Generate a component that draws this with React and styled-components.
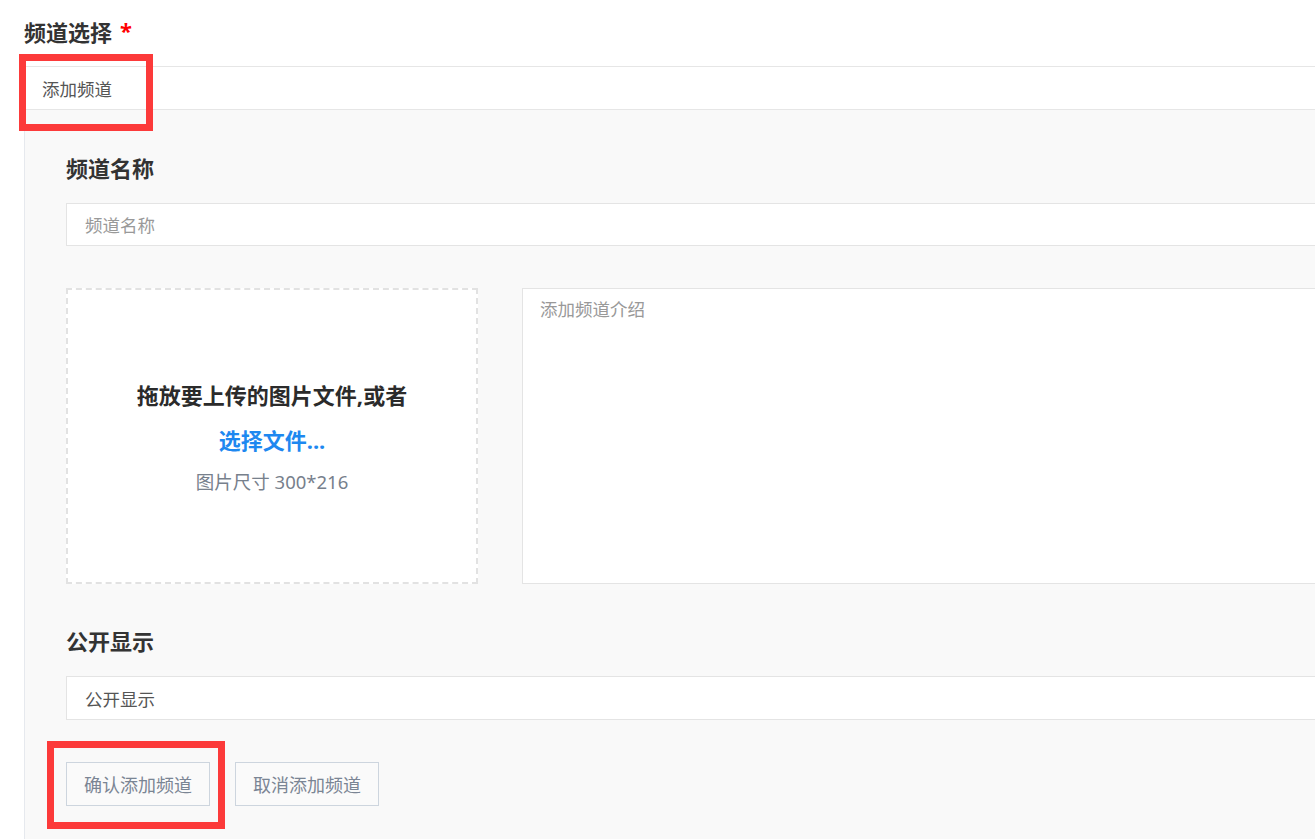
import React from 'react';
import styled, { createGlobalStyle } from 'styled-components';

const GlobalStyle = createGlobalStyle`
  html, body {
    margin: 0;
    padding: 0;
    background: #fff;
    overflow: hidden;
  }
  body {
    font-family: "Noto Sans", "Noto Sans CJK SC", sans-serif;
    color: #333;
  }
`;

const Page = styled.div`
  width: 1340px;
  padding: 17px 0 0 24px;
  box-sizing: border-box;
`;

const Title = styled.div`
  font-size: 22px;
  font-weight: 700;
  line-height: 30px;
  color: #333;
  margin-bottom: 19px;
  display: flex;
  align-items: center;
  gap: 8px;
`;

const Required = styled.span`
  color: #f00;
  font-size: 22px;
  line-height: 1;
  margin-top: -4px;
`;

const Anchor = styled.div`
  position: relative;
`;

const Highlight = styled.div`
  position: absolute;
  top: ${(p) => p.$top}px;
  left: ${(p) => p.$left}px;
  width: ${(p) => p.$w}px;
  height: ${(p) => p.$h}px;
  border: 7px solid #fc3a3a;
  box-sizing: border-box;
  pointer-events: none;
`;

const SelectRow = styled.div`
  height: 44px;
  box-sizing: border-box;
  border-top: 1px solid #e6e6e6;
  border-bottom: 1px solid #e6e6e6;
  background: #fff;
  display: flex;
  align-items: center;
  padding-left: 18px;
  font-size: 17.5px;
  color: #555;
`;

const Panel = styled.div`
  background: #f9f9f9;
  border-left: 1px solid #e6e9ee;
  padding: 43px 0 40px 41px;
  display: flex;
  flex-direction: column;
`;

const Label = styled.div`
  font-size: 22px;
  font-weight: 700;
  line-height: 30px;
  color: #333;
  margin-bottom: 20px;
`;

const Field = styled.div`
  height: ${(p) => p.$h || 44}px;
  box-sizing: border-box;
  border: 1px solid #e4e4e4;
  background: #fff;
  display: flex;
  align-items: center;
  padding-left: 18px;
  font-size: 17.5px;
  color: ${(p) => (p.$placeholder ? '#999' : '#555')};
  margin-bottom: 42px;
`;

const MediaRow = styled.div`
  display: flex;
  gap: 44px;
  height: 296px;
  margin-bottom: 42px;
`;

const Upload = styled.div`
  width: 412px;
  flex: none;
  box-sizing: border-box;
  border: 2px dashed #e2e2e2;
  background: #fff;
  display: flex;
  flex-direction: column;
  align-items: center;
  justify-content: center;
  padding-top: 4px;
`;

const DropText = styled.div`
  font-size: 22px;
  font-weight: 700;
  color: #2b2b2b;
  line-height: 30px;
`;

const PickText = styled.div`
  font-size: 22px;
  font-weight: 700;
  color: #1e88f0;
  line-height: 30px;
  margin-top: 15px;
`;

const SizeText = styled.div`
  font-size: 18.5px;
  color: #77808c;
  line-height: 28px;
  margin-top: 13px;
`;

const TextArea = styled.div`
  flex: 1;
  box-sizing: border-box;
  border: 1px solid #e4e4e4;
  background: #fff;
  padding: 7px 17px;
  font-size: 17.5px;
  color: #999;
`;

const Actions = styled.div`
  display: flex;
  gap: 25px;
`;

const Button = styled.div`
  height: 44px;
  box-sizing: border-box;
  padding: 0 17px;
  border: 1px solid #cdd5de;
  background: #fafafa;
  color: #7a8594;
  font-size: 18px;
  display: flex;
  align-items: center;
`;

export default function App() {
  return (
    <Page>
      <GlobalStyle />
      <Title>
        频道选择 <Required>*</Required>
      </Title>
      <Anchor>
        <SelectRow>添加频道</SelectRow>
        <Highlight $top={-12} $left={-5} $w={134} $h={77} />
      </Anchor>
      <Panel>
        <Label>频道名称</Label>
        <Field $placeholder $h={43}>频道名称</Field>
        <MediaRow>
          <Upload>
            <DropText>拖放要上传的图片文件,或者</DropText>
            <PickText>选择文件...</PickText>
            <SizeText>图片尺寸 300*216</SizeText>
          </Upload>
          <TextArea>添加频道介绍</TextArea>
        </MediaRow>
        <Label>公开显示</Label>
        <Field>公开显示</Field>
        <Actions>
          <Anchor>
            <Button>确认添加频道</Button>
            <Highlight $top={-21} $left={-19} $w={178} $h={88} />
          </Anchor>
          <Button>取消添加频道</Button>
        </Actions>
      </Panel>
    </Page>
  );
}
